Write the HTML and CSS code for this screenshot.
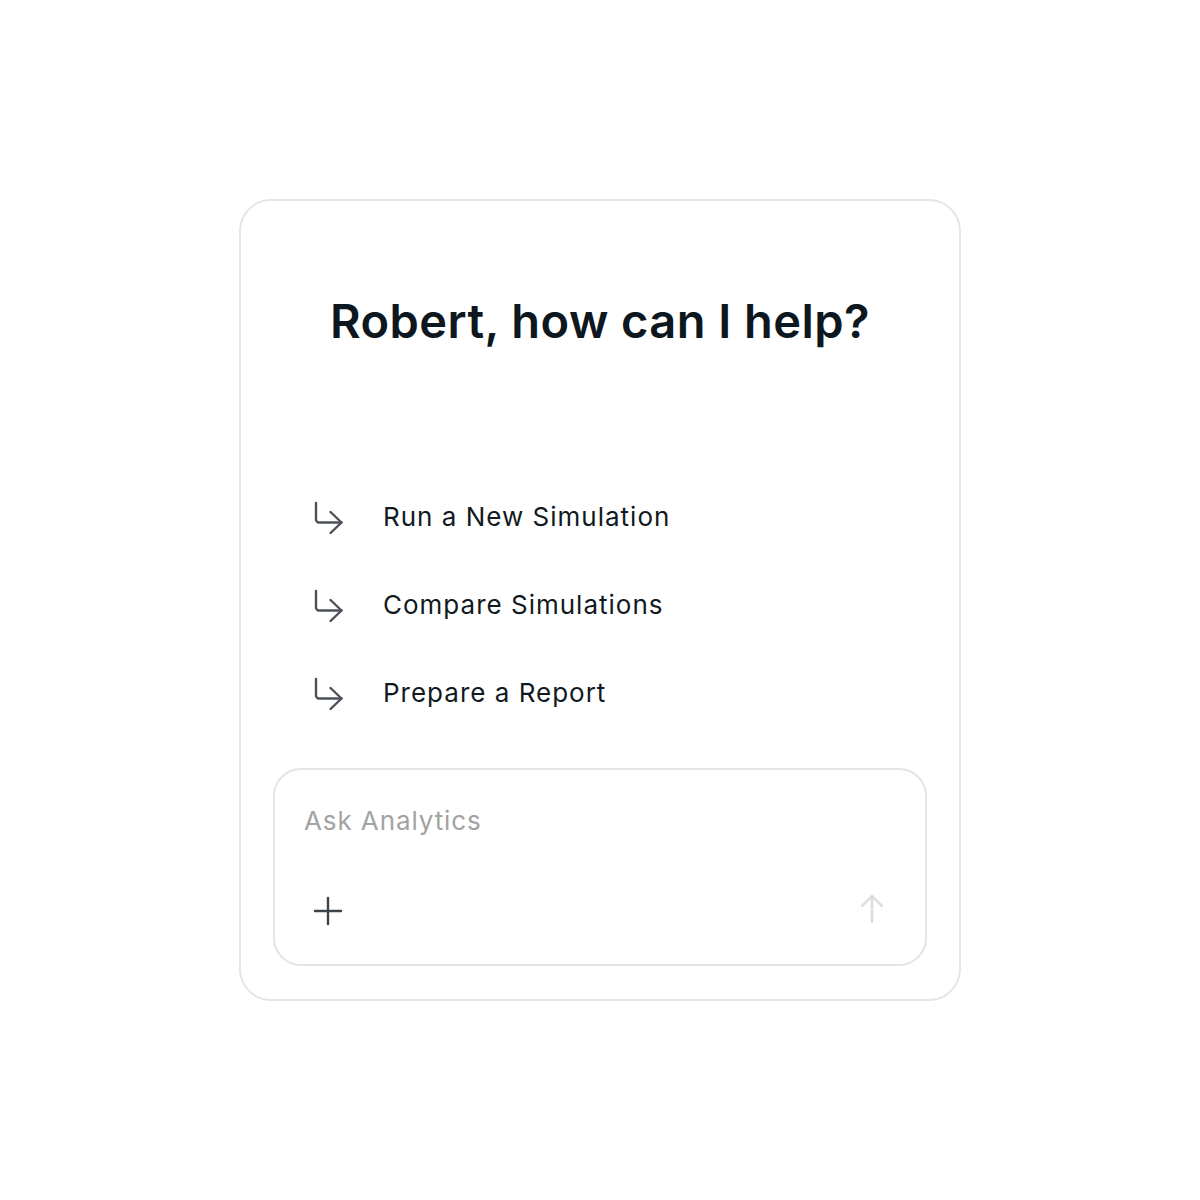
FILE: index.html
```html
<!DOCTYPE html>
<html lang="en">
<head>
<meta charset="utf-8">
<title>Analytics</title>
<link rel="stylesheet" href="styles.css">
</head>
<body>
<main class="page">
  <section class="card">
    <h1 class="title">Robert, how can I help?</h1>
    <ul class="suggestions">
      <li class="suggestion">
        <svg class="s-icon" viewBox="0 0 32 36" width="32" height="36" aria-hidden="true"><path d="M4 4V20.5a3 3 0 0 0 3 3H29.5" fill="none" stroke="#4b5157" stroke-width="2.4" stroke-linecap="round" stroke-linejoin="round"/><path d="M18.5 13L29.5 23.5L18.5 34" fill="none" stroke="#4b5157" stroke-width="2.4" stroke-linecap="round" stroke-linejoin="round"/></svg>
        <span class="s-text">Run a New Simulation</span>
      </li>
      <li class="suggestion">
        <svg class="s-icon" viewBox="0 0 32 36" width="32" height="36" aria-hidden="true"><path d="M4 4V20.5a3 3 0 0 0 3 3H29.5" fill="none" stroke="#4b5157" stroke-width="2.4" stroke-linecap="round" stroke-linejoin="round"/><path d="M18.5 13L29.5 23.5L18.5 34" fill="none" stroke="#4b5157" stroke-width="2.4" stroke-linecap="round" stroke-linejoin="round"/></svg>
        <span class="s-text">Compare Simulations</span>
      </li>
      <li class="suggestion">
        <svg class="s-icon" viewBox="0 0 32 36" width="32" height="36" aria-hidden="true"><path d="M4 4V20.5a3 3 0 0 0 3 3H29.5" fill="none" stroke="#4b5157" stroke-width="2.4" stroke-linecap="round" stroke-linejoin="round"/><path d="M18.5 13L29.5 23.5L18.5 34" fill="none" stroke="#4b5157" stroke-width="2.4" stroke-linecap="round" stroke-linejoin="round"/></svg>
        <span class="s-text">Prepare a Report</span>
      </li>
    </ul>
    <div class="composer">
      <div class="placeholder">Ask Analytics</div>
      <div class="composer-bar">
        <button class="icon-btn" type="button" aria-label="Add">
          <svg viewBox="0 0 40 40" width="40" height="40" aria-hidden="true"><path d="M20 7V33M7 20H33" fill="none" stroke="#3c434a" stroke-width="2.4" stroke-linecap="round"/></svg>
        </button>
        <button class="icon-btn send" type="button" aria-label="Send">
          <svg viewBox="0 0 40 40" width="40" height="40" aria-hidden="true"><path d="M20 33V7M10 17L20 7L30 17" fill="none" stroke="#dcdcdc" stroke-width="2.4" stroke-linecap="round" stroke-linejoin="round"/></svg>
        </button>
      </div>
    </div>
  </section>
</main>
</body>
</html>
```

FILE: styles.css
```css
* { box-sizing: border-box; }
html, body { margin: 0; padding: 0; background: #ffffff; }
body { font-family: Inter, "Noto Sans", "Liberation Sans", sans-serif; color: #0f1720; }

.page {
  display: flex;
  justify-content: center;
  padding-top: 199px;
}

.card {
  width: 722px;
  height: 802px;
  border: 2px solid #e6e6e6;
  border-radius: 32px;
  padding: 32px;
  display: flex;
  flex-direction: column;
}

.title {
  margin: 60px 0 0;
  font-size: 47px;
  line-height: 56px;
  font-weight: 600;
  text-align: center;
  color: #0d1720;
  letter-spacing: 0.45px;
}

.suggestions {
  list-style: none;
  margin: 152px 0 0;
  padding: 0 0 0 39px;
  display: flex;
  flex-direction: column;
  gap: 56px;
}

.suggestion {
  display: flex;
  align-items: center;
  gap: 39px;
  height: 32px;
}

.s-icon { flex: none; margin-top: 0; }

.s-text {
  font-size: 26px;
  line-height: 32px;
  letter-spacing: 1px;
  color: #111a22;
}

.composer {
  margin-top: 59px;
  height: 198px;
  border: 2px solid #e4e4e4;
  border-radius: 28px;
  display: flex;
  flex-direction: column;
  justify-content: space-between;
}

.placeholder {
  padding: 35px 29px 0;
  font-size: 26px;
  line-height: 32px;
  letter-spacing: 0.9px;
  color: #a3a3a3;
}

.composer-bar {
  display: flex;
  justify-content: space-between;
  padding: 0 33px 33px;
}

.icon-btn {
  width: 40px;
  height: 40px;
  padding: 0;
  border: 0;
  background: transparent;
  display: block;
}
.icon-btn svg { display: block; }
.icon-btn.send svg { transform: translateY(-2px); }
```
